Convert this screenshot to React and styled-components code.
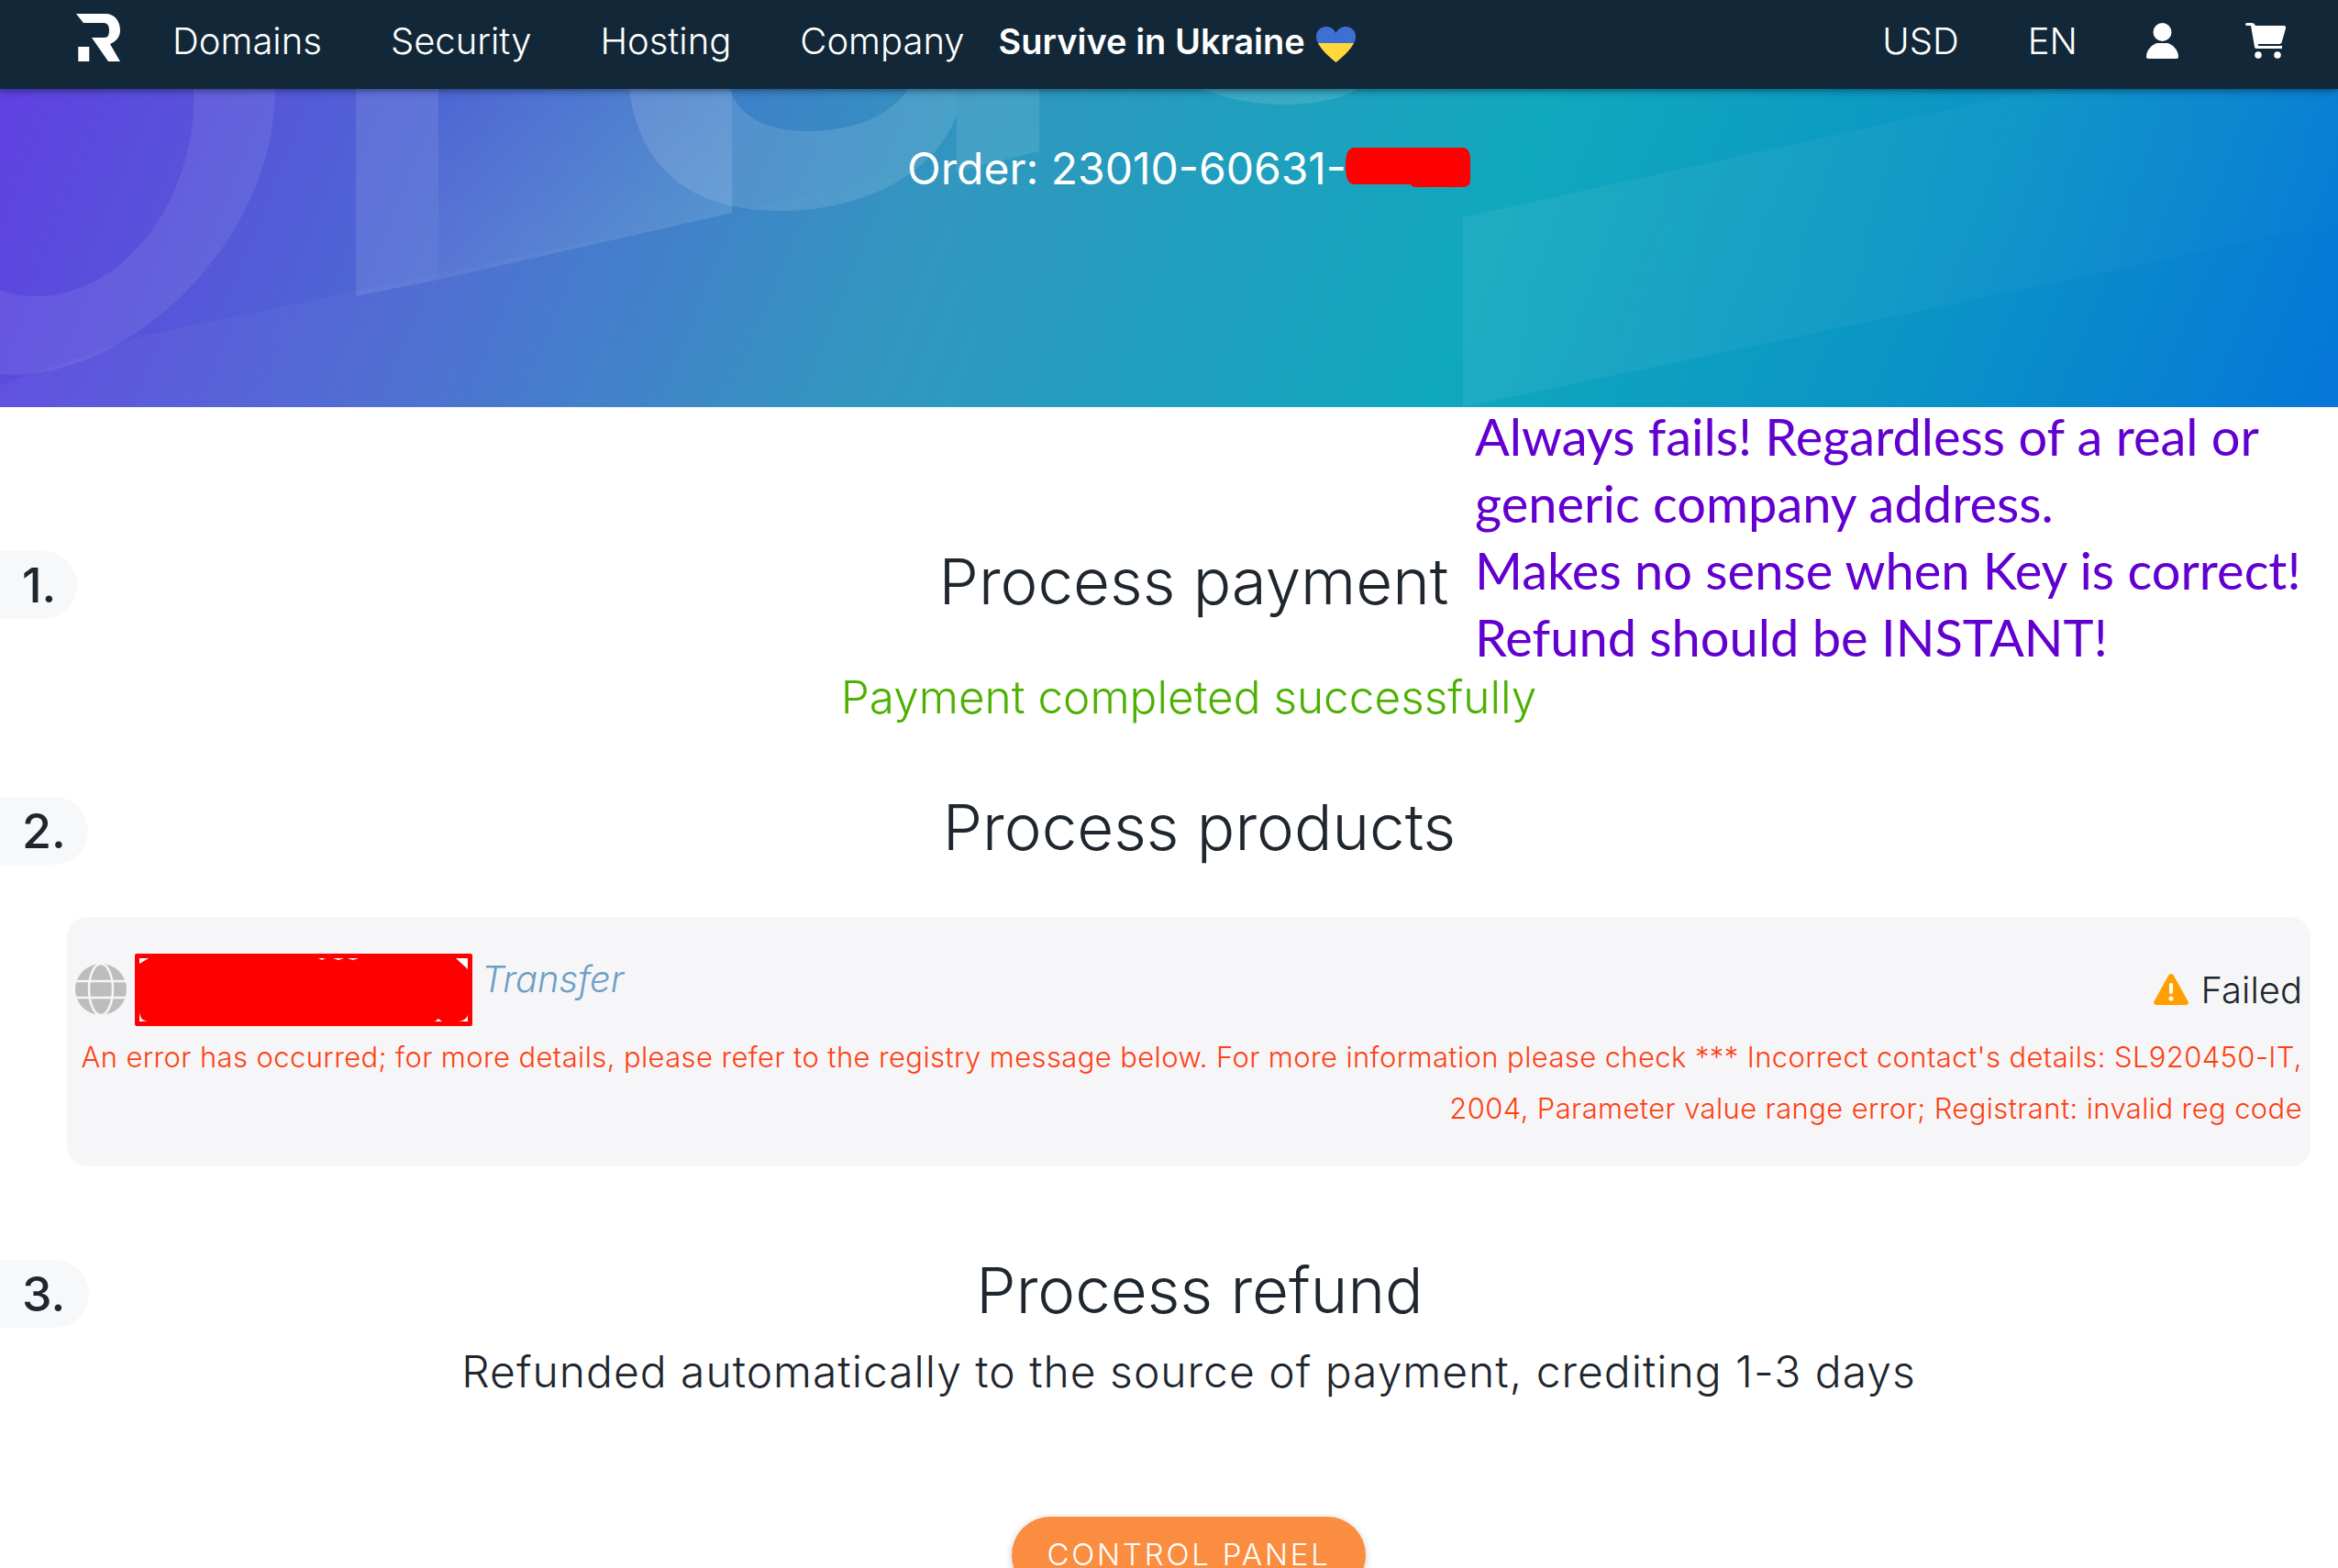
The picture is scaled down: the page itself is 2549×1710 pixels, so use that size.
import React from "react";
import styled, { createGlobalStyle } from "styled-components";

const Global = createGlobalStyle`
  html, body { margin: 0; padding: 0; background: #fff; overflow: hidden; }
  #root { height: 1710px; overflow: hidden; }
  * { box-sizing: border-box; }
`;

const Page = styled.div`
  position: relative;
  width: 2549px;
  height: 1710px;
  overflow: hidden;
  font-family: Inter, "Open Sans", sans-serif;
  font-weight: 300;
  color: #20262e;
`;

const Header = styled.header`
  position: relative;
  z-index: 2;
  height: 97px;
  background: #122838;
  display: flex;
  align-items: flex-start;
  padding: 15px 57px 0 83px;
  box-shadow: 0 2px 7px rgba(10, 30, 50, 0.55);
  color: #fff;
`;

const Logo = styled.svg`
  width: 48px;
  height: 52px;
  margin-right: 57px;
  flex: none;
`;

const NavItem = styled.span`
  font-size: 40px;
  line-height: 46px;
  margin-top: 7px;
  margin-right: ${(p) => p.$gap}px;
  white-space: nowrap;
`;

const Survive = styled(NavItem)`
  font-size: 38px;
  font-weight: 600;
  margin-right: 12px;
`;

const Heart = styled.svg`
  width: 43px;
  height: 39px;
  margin-top: 14px;
  flex: none;
`;

const Spacer = styled.div`
  flex: 1;
`;

const IconSvg = styled.svg`
  height: 39px;
  width: ${(p) => p.$w}px;
  margin-top: 10px;
  margin-right: ${(p) => p.$gap || 0}px;
  flex: none;
`;

const Banner = styled.section`
  position: relative;
  height: 347px;
  background: linear-gradient(112deg, #6040e2 0%, #4c6ad2 20%, #3096bf 40%, #10a8bd 63%, #0a94c6 82%, #0676d8 100%);
  overflow: hidden;
  padding-top: 64px;
  padding-left: 73px;
  padding-right: 30px;
  display: flex;
  justify-content: center;
  align-items: flex-start;
`;

const BannerArt = styled.svg`
  position: absolute;
  inset: 0;
  width: 2549px;
  height: 347px;
`;

const OrderLine = styled.h1`
  position: relative;
  margin: 0;
  font-size: 48px;
  line-height: 46px;
  font-weight: 400;
  color: #fff;
  display: flex;
  align-items: flex-start;
  white-space: nowrap;
`;

const OrderRedact = styled.svg`
  width: 136px;
  height: 43px;
  flex: none;
  margin-left: -1px;
`;

const Main = styled.main`
  padding: 157px 30px 0 0;
`;

const StepRow = styled.div`
  display: flex;
  align-items: center;
  height: 74px;
  margin-top: ${(p) => p.$mt || 0}px;
`;

const StepPill = styled.div`
  width: ${(p) => p.$w}px;
  height: 74px;
  flex: none;
  border-radius: 0 37px 37px 0;
  background: #f7f8fa;
  font-family: Inter, sans-serif;
  font-size: 52px;
  font-weight: 500;
  line-height: 76px;
  padding-left: 24px;
`;

const StepTitle = styled.h2`
  flex: 1;
  margin: 0;
  padding-bottom: 8px;
  text-align: center;
  font-size: 69px;
  font-weight: 300;
  line-height: 74px;
  color: #20262e;
`;

const Note = styled.p`
  margin: ${(p) => p.$mt}px 0 0 73px;
  text-align: center;
  font-size: ${(p) => p.$size}px;
  letter-spacing: ${(p) => p.$ls || 0}px;
  line-height: 60px;
  font-weight: 300;
  color: ${(p) => p.$color};
  white-space: nowrap;
`;

const Card = styled.div`
  margin: 57px 0 0 73px;
  height: 272px;
  background: #f6f6f9;
  border-radius: 22px;
  padding: 40px 9px 0 9px;
`;

const CardTop = styled.div`
  display: flex;
  align-items: flex-start;
  height: 80px;
`;

const Globe = styled.svg`
  width: 56px;
  height: 56px;
  margin-top: 11px;
  margin-right: 9px;
  flex: none;
`;

const Redact = styled.svg`
  width: 368px;
  height: 79px;
  flex: none;
  margin-right: 10px;
`;

const TransferLabel = styled.span`
  font-size: 40px;
  font-style: italic;
  line-height: 50px;
  margin-top: 3px;
  color: #6f9fc3;
`;

const Status = styled.div`
  margin-left: auto;
  display: flex;
  align-items: center;
  height: 40px;
  margin-top: 19px;
  gap: 13px;
  font-size: 40px;
  font-weight: 300;
  color: #20262e;
`;

const ErrorText = styled.div`
  margin-top: 5px;
  text-align: right;
  font-size: 31px;
  letter-spacing: 0.38px;
  line-height: 56px;
  color: #ff4010;
  white-space: nowrap;
`;

const CtaWrap = styled.div`
  margin: 128px 0 0 73px;
  display: flex;
  justify-content: center;
`;

const Cta = styled.button`
  width: 386px;
  height: 84px;
  border: none;
  border-radius: 42px;
  background: #fb8d41;
  color: #fff;
  font-family: Inter, sans-serif;
  font-weight: 300;
  font-size: 33px;
  letter-spacing: 2.8px;
  text-transform: uppercase;
  padding: 0 0 2px;
  box-shadow: 0 2px 8px rgba(0, 0, 0, 0.2);
`;

const Annotation = styled.div`
  position: absolute;
  left: 1608px;
  top: 439px;
  font-family: Lato, sans-serif;
  font-size: 56px;
  line-height: 73px;
  font-weight: 400;
  color: #6200d0;
  white-space: nowrap;
`;

export default function App() {
  return (
    <Page>
      <Global />
      <Header>
        <Logo viewBox="0 0 48 52">
          <path fill="#fff" d="M0 0h32c10 0 16 8 16 18 0 7-4 12-11 15l11 19H35L17 26h14c4 0 5-3 5-8s-2-8-6-8H8z" />
          <rect fill="#fff" x="2.300" y="36" width="12" height="16" />
        </Logo>
        <NavItem $gap={75}>Domains</NavItem>
        <NavItem $gap={75}>Security</NavItem>
        <NavItem $gap={75}>Hosting</NavItem>
        <NavItem $gap={37}>Company</NavItem>
        <Survive as="span">Survive in Ukraine</Survive>
        <Heart viewBox="0 0 43 39">
          <path fill="#3f6fd2" d="M0 11C0 4 5 0 11 0c4 0 8 2 10.500 7C24 2 28 0 32 0c6 0 11 4 11 11 0 3-1 5-2 7H2C1 16 0 14 0 11z" />
          <path fill="#ffd93b" d="M2 18h39c-4 8-12 15-19.500 21C14 33 6 26 2 18z" />
        </Heart>
        <Spacer />
        <NavItem $gap={75}>USD</NavItem>
        <NavItem $gap={75}>EN</NavItem>
        <IconSvg $w={35} $gap={73} viewBox="0 0 35 39">
          <circle fill="#fff" cx="17.500" cy="10" r="10" />
          <path fill="#fff" d="M0 37c0-8 7-14 12-15h11c5 1 12 7 12 15 0 1-1 2-2 2H2c-1 0-2-1-2-2z" />
        </IconSvg>
        <IconSvg $w={44} viewBox="0 0 44 39">
          <path fill="#fff" d="M1 0h6c2 0 3 1 4 3h31c2 0 2 1 2 3l-4 14c0 2-2 3-3 3H14v2h26v3H12c-1 0-2-1-2-2L6 3H1C0 3 0 0 1 0z" />
          <circle fill="#fff" cx="14" cy="35" r="3.800" />
          <circle fill="#fff" cx="35" cy="35" r="3.800" />
        </IconSvg>
      </Header>
      <Banner>
        <BannerArt viewBox="0 97 2549 347">
          <defs>
            <linearGradient id="fade" x1="0" x2="1" y1="0" y2="0">
              <stop offset="0" stopColor="#fff" stopOpacity="0.06" />
              <stop offset="1" stopColor="#fff" stopOpacity="0.01" />
            </linearGradient>
            <linearGradient id="rise" x1="0" x2="1" y1="0" y2="1">
              <stop offset="0" stopColor="#fff" stopOpacity="0" />
              <stop offset="1" stopColor="#fff" stopOpacity="0.16" />
            </linearGradient>
            <linearGradient id="floor" x1="0" x2="1" y1="0" y2="0">
              <stop offset="0" stopColor="#fff" stopOpacity="0.04" />
              <stop offset="1" stopColor="#fff" stopOpacity="0" />
            </linearGradient>
          </defs>
          <path fill="url(#floor)" d="M0 420L153 367 798 232 1300 120V444H0z" />
          <path fill="#fff" opacity="0.08" d="M211 97C216 210 140 323 38 323c-13 0-27-2-38-7v92C130 420 300 270 300 97z" />
          <path fill="#fff" opacity="0.1" d="M388 97h90v208l-90 18z" />
          <path fill="url(#rise)" d="M478 97h320v135l-320 73z" />
          <path fill="#fff" opacity="0.12" d="M686 97c10 80 60 133 164 133 90 0 170-40 193-105V97H990c-20 30-60 46-110 46-50 0-75-20-85-46z" />
          <path fill="#fff" opacity="0.1" d="M1043 97h90v68l-90 22z" />
          <path fill="#fff" opacity="0.12" d="M1310 97c30 12 60 17 90 17 30 0 60-5 80-17z" />
          <path fill="url(#fade)" d="M1595 237L2228 97h321v146L1595 444z" />
        </BannerArt>
        <OrderLine>
          Order: 23010-60631-
          <OrderRedact viewBox="0 0 136 43">
            <path fill="#f00" d="M10 0h118c5 0 8 5 8 12v24c0 4-3 7-8 7H76c-3 0-4-1-5-3H10C3 40 0 34 0 20S3 0 10 0z" />
          </OrderRedact>
        </OrderLine>
      </Banner>
      <Annotation>
        Always fails! Regardless of a real or
        <br />
        generic company address.
        <br />
        Makes no sense when Key is correct!
        <br />
        Refund should be INSTANT!
      </Annotation>
      <Main>
        <StepRow>
          <StepPill $w={84}>1.</StepPill>
          <StepTitle>Process payment</StepTitle>
        </StepRow>
        <Note $mt={55} $size={49.500} $color="#4cb000">Payment completed successfully</Note>
        <StepRow $mt={79}>
          <StepPill $w={96}>2.</StepPill>
          <StepTitle>Process products</StepTitle>
        </StepRow>
        <Card>
          <CardTop>
            <Globe viewBox="0 0 56 56">
              <ellipse cx="28" cy="28" rx="28" ry="28" fill="#bdbdbd" />
              <g fill="none" stroke="#f6f6f9" strokeWidth="2.500">
                <ellipse cx="28" cy="28" rx="13" ry="28" />
                <path d="M0 19h56M0 37h56" />
              </g>
            </Globe>
            <Redact viewBox="0 0 368 79">
              <rect width="368" height="79" rx="2" fill="#f00" />
              <path fill="#fff" d="M5 5h10L5 11zM5 62c0 7 3 12 10 12H5zM350 5h13v12zM353 74c6-1 10-4 10-8v8zM327 74l4-3 4 3zM200 5h8l-4 2zM216 5h12l-6 2zM232 5h12l-6 2z" />
            </Redact>
            <TransferLabel>Transfer</TransferLabel>
            <Status>
              <svg width="38" height="34" viewBox="0 0 38 34">
                <path fill="#ffa000" d="M19 0c1.500 0 2.500 1 3 2l15.500 28c1 2 0 4-2.500 4H3c-2.500 0-3.500-2-2.500-4L16 2c.5-1 1.500-2 3-2z" />
                <rect fill="#fff" x="17" y="10" width="4" height="12" rx="2" />
                <circle fill="#fff" cx="19" cy="27" r="2.500" />
              </svg>
              Failed
            </Status>
          </CardTop>
          <ErrorText>
            An error has occurred; for more details, please refer to the registry message below. For more information please check *** Incorrect contact's details: SL920450-IT,
            <br />
            2004, Parameter value range error; Registrant: invalid reg code
          </ErrorText>
        </Card>
        <StepRow $mt={102}>
          <StepPill $w={97}>3.</StepPill>
          <StepTitle>Process refund</StepTitle>
        </StepRow>
        <Note $mt={18} $size={48} $ls={1} $color="#20262e">Refunded automatically to the source of payment, crediting 1-3 days</Note>
        <CtaWrap>
          <Cta>Control panel</Cta>
        </CtaWrap>
      </Main>
    </Page>
  );
}
